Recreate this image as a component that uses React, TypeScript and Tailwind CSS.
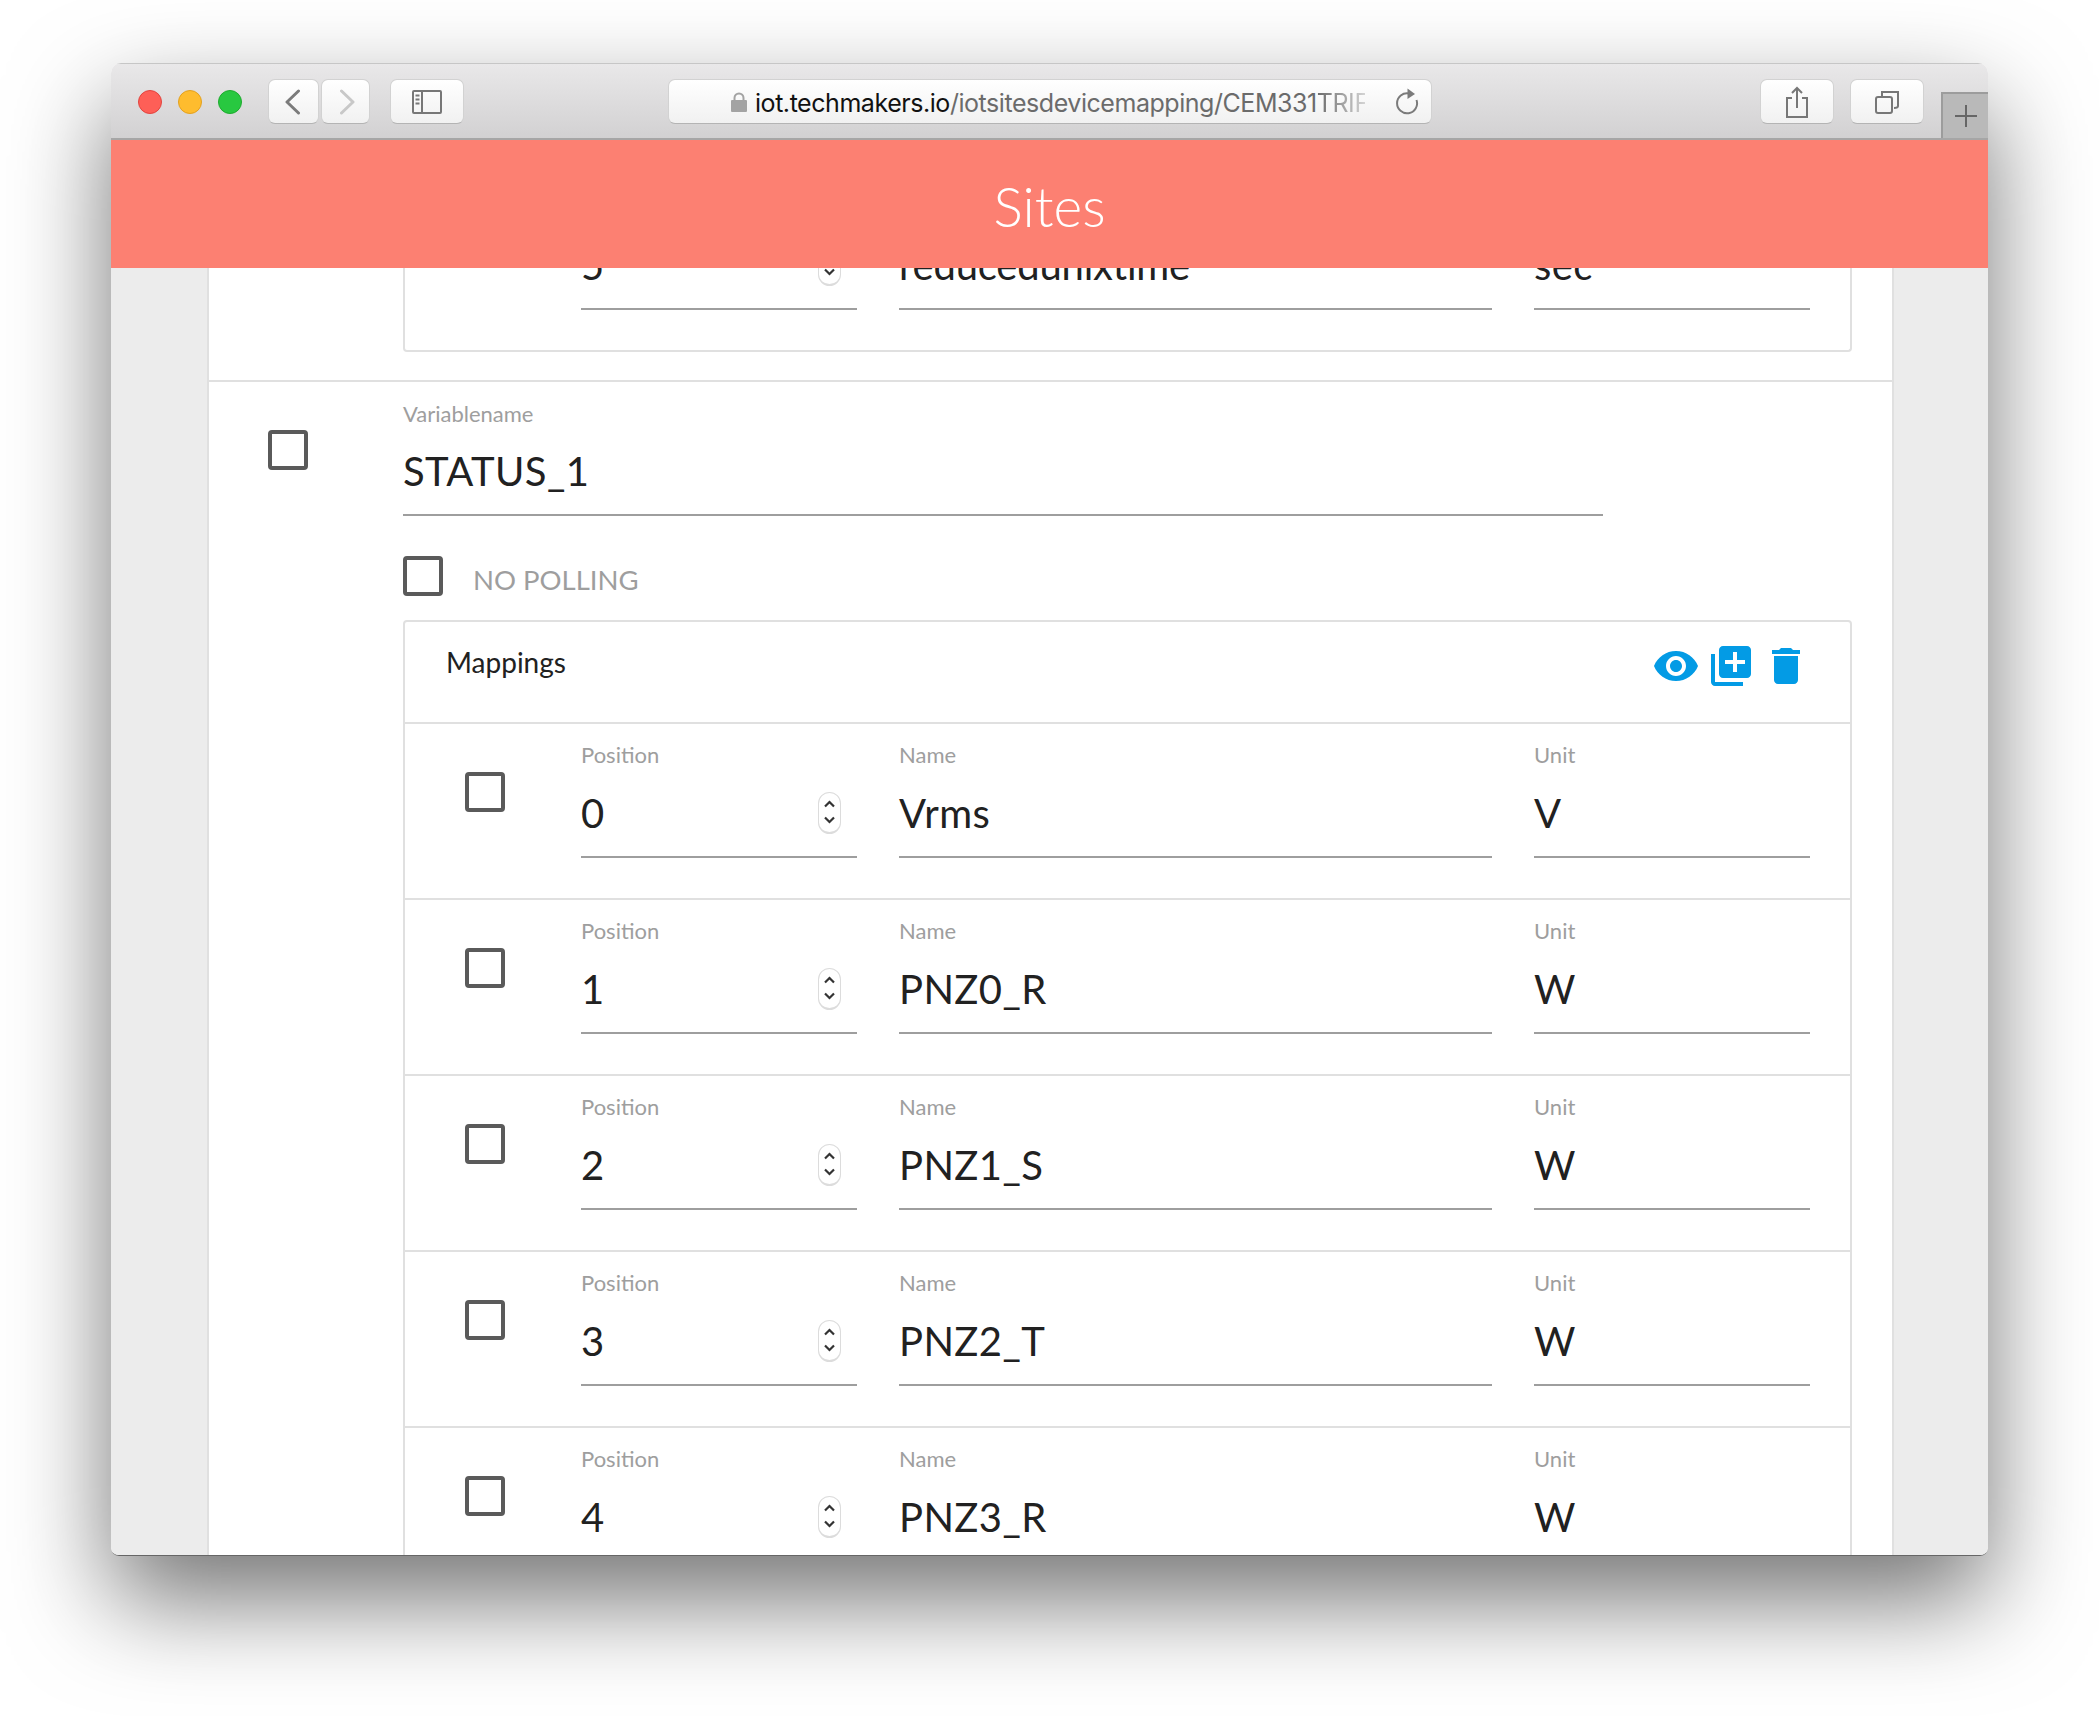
import { MdVisibility, MdLibraryAdd, MdDelete } from "react-icons/md";

const font = "font-['Lato','Noto_Sans',sans-serif]";

function Check() {
  return <div className="w-[40px] h-[40px] shrink-0 border-[4px] border-[#5a5a5a] rounded-[4px]" />;
}

function Spinner() {
  return (
    <div className="w-[23px] h-[42px] mr-[16px] ml-auto shrink-0 rounded-full border border-[#dcdcdc] border-b-2 bg-white flex items-center justify-center">
      <svg width="13" height="26" viewBox="0 0 13 26" fill="none" stroke="#333" strokeWidth="2.2">
        <path d="M2 7.5 L6.5 3 L11 7.5" />
        <path d="M2 18.5 L6.5 23 L11 18.5" />
      </svg>
    </div>
  );
}

function Field({ label, value, width, spinner, tight }: { label: string; value: string; width: string; spinner?: boolean; tight?: boolean }) {
  return (
    <div className={`${width} shrink-0 pt-[19px]`}>
      <div className="h-[24px] text-[22px] leading-[24px] text-[#9e9e9e]">{label}</div>
      <div className={`h-[91px] pt-[2px] border-b-2 border-[#9e9e9e] flex items-center text-[40px] text-[#212121] ${tight ? "tracking-[-0.2px]" : "tracking-[0.4px]"}`}>
        <span>{value}</span>
        {spinner && <Spinner />}
      </div>
    </div>
  );
}

function Row({ pos, name, unit, last, tight }: { pos: string; name: string; unit: string; last?: boolean; tight?: boolean }) {
  return (
    <div className={`h-[176px] shrink-0 flex pl-[60px] ${last ? "" : "border-b-2 border-[#e0e0e0]"}`}>
      <div className="w-[116px] shrink-0 pt-[48px]">
        <Check />
      </div>
      <div className="flex gap-[42px]">
        <Field label="Position" value={pos} width="w-[276px]" spinner />
        <Field label="Name" value={name} width="w-[593px]" tight={tight} />
        <Field label="Unit" value={unit} width="w-[276px]" />
      </div>
    </div>
  );
}

function Toolbar() {
  const btn = "h-[45px] rounded-[7px] bg-gradient-to-b from-white to-[#f1f1f1] border border-[#d2d2d2] border-b-[#b4b4b4] flex items-center justify-center shrink-0";
  return (
    <div className="h-[77px] shrink-0 border-t border-t-[#c6c6c6] border-b-2 border-b-[#a6a6a6] bg-gradient-to-b from-[#e9e8e9] to-[#d2d1d2] flex items-start pt-[15px] pl-[27px]">
      <div className="mt-[11px] w-[24px] h-[24px] shrink-0 rounded-full bg-[#fe5f57] border border-[#e2443f]" />
      <div className="mt-[11px] ml-[16px] w-[24px] h-[24px] shrink-0 rounded-full bg-[#febc2e] border border-[#e3a11f]" />
      <div className="mt-[11px] ml-[16px] w-[24px] h-[24px] shrink-0 rounded-full bg-[#28c840] border border-[#1eab2e]" />
      <div className={`${btn} ml-[26px] w-[51px]`}>
        <svg className="mr-[2px]" width="18" height="26" viewBox="0 0 18 26" fill="none" stroke="#7b7b7b" strokeWidth="3" strokeLinecap="round" strokeLinejoin="round"><path d="M14.5 2 L3 13 L14.5 24" /></svg>
      </div>
      <div className={`${btn} ml-[2px] w-[49px]`}>
        <svg className="ml-[2px]" width="18" height="26" viewBox="0 0 18 26" fill="none" stroke="#c8c8c8" strokeWidth="3" strokeLinecap="round" strokeLinejoin="round"><path d="M3.5 2 L15 13 L3.5 24" /></svg>
      </div>
      <div className={`${btn} ml-[20px] w-[74px]`}>
        <svg width="30" height="24" viewBox="0 0 30 24" fill="none" stroke="#777" strokeWidth="2"><rect x="1" y="1" width="28" height="22" rx="1" /><path d="M10 1 V23" /><path d="M3.5 5.5 H7.5 M3.5 9.5 H7.5 M3.5 13.5 H7.5" /></svg>
      </div>
      <div className={`${btn} ml-[204px] w-[764px] relative pl-[62px]`}>
        <svg className="shrink-0 mr-[8px]" width="16" height="20" viewBox="0 0 16 20"><path d="M3.5 9 V6 a4.5 4.5 0 0 1 9 0 V9" fill="none" stroke="#a3a3a3" strokeWidth="2" /><rect x="0" y="8" width="16" height="12" rx="1" fill="#a3a3a3" /></svg>
        <div className="w-[610px] shrink-0 pt-[2px] overflow-hidden whitespace-nowrap font-['Inter',sans-serif] text-[25px] leading-[32px] tracking-[-0.45px]">
          <span className="text-[#111]">iot.techmakers.io</span>
          <span className="text-[#6b6b6b]">/iotsitesdevicemapping/CEM331</span>
          <span className="inline-block bg-gradient-to-r from-[#6b6b6b] to-[#f0f0f0] bg-clip-text text-transparent">TRIF/</span>
        </div>
        <svg className="ml-auto mr-[12px] shrink-0" width="24" height="28" viewBox="0 0 24 28" fill="none"><path d="M14 5.5 A10 10 0 1 0 21.5 12" stroke="#7b7b7b" strokeWidth="2" /><path d="M12.5 0.5 L20 6 L12.5 11 Z" fill="#7b7b7b" /></svg>
      </div>
      <div className={`${btn} ml-[328px] w-[74px]`}>
        <svg width="24" height="32" viewBox="0 0 24 32" fill="none" stroke="#777" strokeWidth="2"><path d="M7 12 H2 V31 H22 V12 H17" /><path d="M12 22 V2 M7 7 L12 2 L17 7" /></svg>
      </div>
      <div className={`${btn} ml-[16px] w-[74px]`}>
        <svg width="26" height="24" viewBox="0 0 26 24" fill="none" stroke="#777" strokeWidth="2"><rect x="2" y="7" width="16" height="16" rx="2" /><path d="M8 7 V2 H24 V16 Q24 18 20 18" /></svg>
      </div>
      <div className="ml-[17px] mt-[13px] w-[47px] h-[46px] shrink-0 bg-[#b9b9b9] border-l-2 border-t-2 border-[#9c9c9c] flex items-center justify-center">
        <svg width="24" height="24" viewBox="0 0 24 24" stroke="#666" strokeWidth="2"><path d="M12 1 V23 M1 12 H23" /></svg>
      </div>
    </div>
  );
}

export default function App() {
  return (
    <div className={`w-[2100px] h-[1716px] bg-white pt-[63px] pl-[111px] ${font} overflow-hidden`}>
      <div className="w-[1877px] h-[1493px] flex flex-col rounded-t-[10px] rounded-b-[8px] overflow-hidden shadow-[0_44px_100px_0_rgba(0,0,0,0.55)] border-b border-[#666]">
        <Toolbar />
        <div className="h-[128px] shrink-0 bg-[#fc8072] flex items-center justify-center text-white text-[55px] font-light pt-[5px]">Sites</div>
        <div className="flex-1 bg-[#ececec] overflow-hidden pl-[96px] pr-[94px]">
          <div className="bg-white border-x-2 border-[#e0e0e0]">
            <div className="-mt-[92px] h-[176px] ml-[194px] mr-[40px] border-x-2 border-b-2 border-[#e0e0e0] rounded-b-[4px] overflow-hidden">
              <Row pos="5" name="reducedunixtime" unit="sec" last tight />
            </div>
            <div className="mt-[28px] border-t-2 border-[#e0e0e0] flex">
              <div className="w-[194px] shrink-0 pl-[59px] pt-[48px]">
                <Check />
              </div>
              <div className="flex-1 pr-[40px]">
                <div className="w-[1200px] pt-[20px]">
                  <div className="h-[24px] text-[22px] leading-[24px] text-[#9e9e9e]">Variablename</div>
                  <div className="h-[90px] border-b-2 border-[#9e9e9e] flex items-center pt-[2px] text-[40px] text-[#212121] tracking-[0.4px]">STATUS_1</div>
                </div>
                <div className="mt-[40px] h-[40px] flex items-center gap-[30px]">
                  <Check />
                  <span className="mt-[8px] text-[27.5px] leading-[32px] text-[#9e9e9e]">NO POLLING</span>
                </div>
                <div className="mt-[24px] border-2 border-[#e0e0e0] rounded-t-[4px]">
                  <div className="h-[102px] border-b-2 border-[#e0e0e0] flex items-start justify-between pl-[41px] pr-[40px]">
                    <span className="mt-[22px] text-[28px] leading-[36px] text-[#212121]">Mappings</span>
                    <div className="flex gap-[7px] mt-[20px] text-[#039be5]">
                      <MdVisibility className="w-[48px] h-[48px]" />
                      <MdLibraryAdd className="w-[48px] h-[48px]" />
                      <MdDelete className="w-[48px] h-[48px]" />
                    </div>
                  </div>
                  <Row pos="0" name="Vrms" unit="V" />
                  <Row pos="1" name="PNZ0_R" unit="W" />
                  <Row pos="2" name="PNZ1_S" unit="W" />
                  <Row pos="3" name="PNZ2_T" unit="W" />
                  <Row pos="4" name="PNZ3_R" unit="W" last />
                </div>
              </div>
            </div>
          </div>
        </div>
      </div>
    </div>
  );
}
